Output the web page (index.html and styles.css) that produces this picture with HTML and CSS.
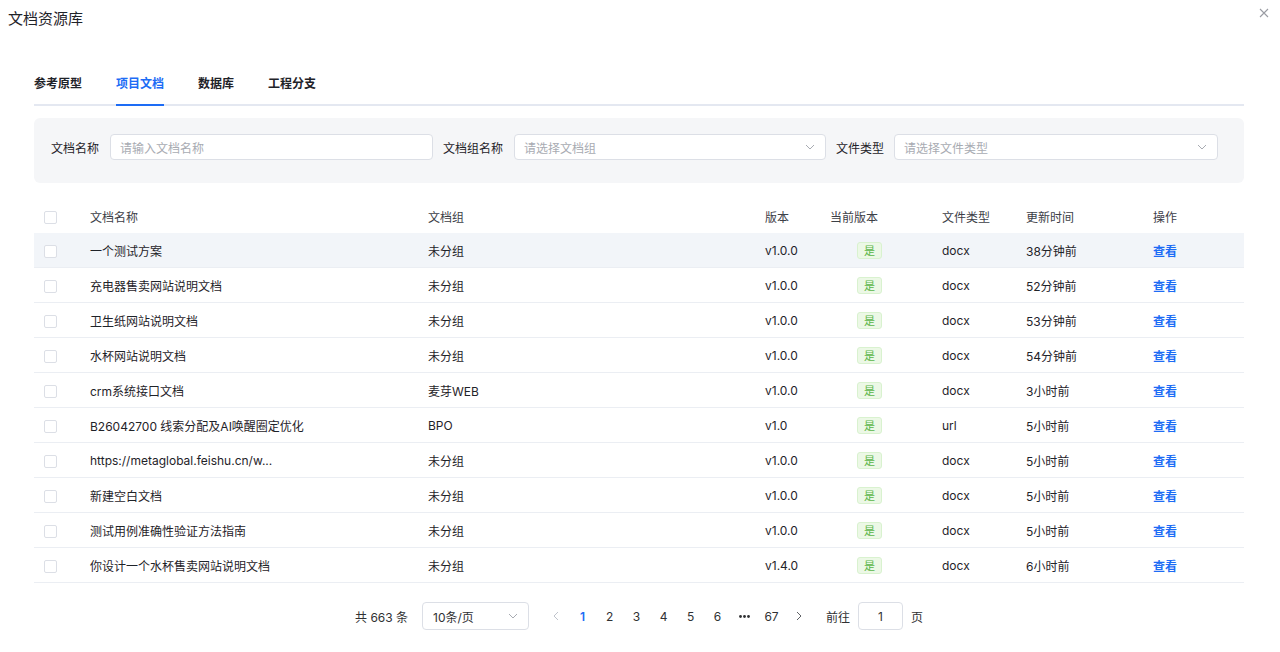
FILE: index.html
```html
<!DOCTYPE html>
<html lang="zh-CN">
<head>
    <meta charset="utf-8">
    <title>文档资源库</title>
    <link rel="stylesheet" href="styles.css">
</head>
<body>
    <div class="Dialog">
        <div class="Header">
            <span class="Title">文档资源库</span>
            <svg class="Close" width="10" height="10" viewBox="0 0 10 10"><path d="M1 1L9 9M9 1L1 9" stroke="#9a9ca3" stroke-width="1.1"/></svg>
        </div>

        <div class="Tabs">
            <div class="Tab">参考原型</div>
            <div class="Tab Active">项目文档</div>
            <div class="Tab">数据库</div>
            <div class="Tab">工程分支</div>
        </div>

        <div class="Filter">
            <label class="Label">文档名称</label>
            <div class="Input Name"><span class="Placeholder">请输入文档名称</span></div>
            <label class="Label">文档组名称</label>
            <div class="Input Group">
                <span class="Placeholder">请选择文档组</span>
                <svg class="Arrow" width="10" height="6" viewBox="0 0 10 6"><path d="M1 1L5 5L9 1" fill="none" stroke="#a8abb2" stroke-width="1"/></svg>
            </div>
            <label class="Label Short">文件类型</label>
            <div class="Input Type">
                <span class="Placeholder">请选择文件类型</span>
                <svg class="Arrow" width="10" height="6" viewBox="0 0 10 6"><path d="M1 1L5 5L9 1" fill="none" stroke="#a8abb2" stroke-width="1"/></svg>
            </div>
        </div>

        <table class="Grid">
            <colgroup>
                <col style="width:46px"><col style="width:338px"><col style="width:337px"><col style="width:65px">
                <col style="width:112px"><col style="width:84px"><col style="width:127px"><col style="width:101px">
            </colgroup>
            <thead>
                <tr>
                    <th><span class="Check"></span></th>
                    <th>文档名称</th><th>文档组</th><th>版本</th><th>当前版本</th><th>文件类型</th><th>更新时间</th><th>操作</th>
                </tr>
            </thead>
            <tbody>
                <tr class="Hover">
                    <td><span class="Check"></span></td><td>一个测试方案</td><td>未分组</td><td>v1.0.0</td>
                    <td><span class="Tag">是</span></td><td>docx</td><td>38分钟前</td><td><a class="Link">查看</a></td>
                </tr>
                <tr>
                    <td><span class="Check"></span></td><td>充电器售卖网站说明文档</td><td>未分组</td><td>v1.0.0</td>
                    <td><span class="Tag">是</span></td><td>docx</td><td>52分钟前</td><td><a class="Link">查看</a></td>
                </tr>
                <tr>
                    <td><span class="Check"></span></td><td>卫生纸网站说明文档</td><td>未分组</td><td>v1.0.0</td>
                    <td><span class="Tag">是</span></td><td>docx</td><td>53分钟前</td><td><a class="Link">查看</a></td>
                </tr>
                <tr>
                    <td><span class="Check"></span></td><td>水杯网站说明文档</td><td>未分组</td><td>v1.0.0</td>
                    <td><span class="Tag">是</span></td><td>docx</td><td>54分钟前</td><td><a class="Link">查看</a></td>
                </tr>
                <tr>
                    <td><span class="Check"></span></td><td>crm系统接口文档</td><td>麦芽WEB</td><td>v1.0.0</td>
                    <td><span class="Tag">是</span></td><td>docx</td><td>3小时前</td><td><a class="Link">查看</a></td>
                </tr>
                <tr>
                    <td><span class="Check"></span></td><td>B26042700 线索分配及AI唤醒圈定优化</td><td>BPO</td><td>v1.0</td>
                    <td><span class="Tag">是</span></td><td>url</td><td>5小时前</td><td><a class="Link">查看</a></td>
                </tr>
                <tr>
                    <td><span class="Check"></span></td><td>https://metaglobal.feishu.cn/w...</td><td>未分组</td><td>v1.0.0</td>
                    <td><span class="Tag">是</span></td><td>docx</td><td>5小时前</td><td><a class="Link">查看</a></td>
                </tr>
                <tr>
                    <td><span class="Check"></span></td><td>新建空白文档</td><td>未分组</td><td>v1.0.0</td>
                    <td><span class="Tag">是</span></td><td>docx</td><td>5小时前</td><td><a class="Link">查看</a></td>
                </tr>
                <tr>
                    <td><span class="Check"></span></td><td>测试用例准确性验证方法指南</td><td>未分组</td><td>v1.0.0</td>
                    <td><span class="Tag">是</span></td><td>docx</td><td>5小时前</td><td><a class="Link">查看</a></td>
                </tr>
                <tr>
                    <td><span class="Check"></span></td><td>你设计一个水杯售卖网站说明文档</td><td>未分组</td><td>v1.4.0</td>
                    <td><span class="Tag">是</span></td><td>docx</td><td>6小时前</td><td><a class="Link">查看</a></td>
                </tr>
            </tbody>
        </table>

        <div class="Pager">
            <span class="Total">共 663 条</span>
            <div class="Size">
                <span>10条/页</span>
                <svg width="10" height="6" viewBox="0 0 10 6"><path d="M1 1L5 5L9 1" fill="none" stroke="#a8abb2" stroke-width="1"/></svg>
            </div>
            <div class="Pages">
                <span class="Page"><svg width="6" height="10" viewBox="0 0 6 10"><path d="M5 1L1 5L5 9" fill="none" stroke="#c0c4cc" stroke-width="1"/></svg></span>
                <span class="Page Current">1</span>
                <span class="Page">2</span>
                <span class="Page">3</span>
                <span class="Page">4</span>
                <span class="Page">5</span>
                <span class="Page">6</span>
                <span class="Page"><svg width="11" height="3" viewBox="0 0 11 3"><circle cx="1.5" cy="1.5" r="1.4" fill="#303133"/><circle cx="5.5" cy="1.5" r="1.4" fill="#303133"/><circle cx="9.5" cy="1.5" r="1.4" fill="#303133"/></svg></span>
                <span class="Page">67</span>
                <span class="Page"><svg width="6" height="10" viewBox="0 0 6 10"><path d="M1 1L5 5L1 9" fill="none" stroke="#606266" stroke-width="1"/></svg></span>
            </div>
            <span class="Jump">前往</span>
            <div class="JumpInput">1</div>
            <span class="Unit">页</span>
        </div>
    </div>
</body>
</html>
```

FILE: styles.css
```css
body {
    margin: 0;
    background: #ffffff;
    font-family: "Inter", "Noto Sans CJK SC", sans-serif;
    font-size: 12px;
    color: #1f2329;
}

.Dialog {
    width: 1280px;
    height: 652px;
    position: relative;
}

.Header {
    height: 34px;
    padding-left: 8px;
    display: flex;
    align-items: center;
}

.Title {
    font-size: 15px;
    color: #1f2329;
}

.Close {
    position: absolute;
    top: 8px;
    right: 11px;
}

.Tabs {
    margin: 36px 36px 0 34px;
    display: flex;
    gap: 34px;
    border-bottom: 2px solid #e4e8f1;
    height: 34px;
}

.Tab {
    font-size: 12px;
    font-weight: 600;
    color: #1f2329;
    line-height: 28px;
    margin-bottom: -2px;
    border-bottom: 2px solid transparent;
}

.Tab.Active {
    color: #1d6cf5;
    border-bottom-color: #1d6cf5;
}

.Filter {
    margin: 12px 36px 0 34px;
    height: 65px;
    box-sizing: border-box;
    padding: 16px 0 0 17px;
    background: #f5f6f8;
    border-radius: 6px;
    display: flex;
    align-items: flex-start;
}

.Label {
    line-height: 26px;
    padding-top: 2px;
    font-size: 12px;
    color: #1f2329;
    margin-right: 11px;
}

.Label.Short {
    margin-right: 10px;
}

.Input {
    height: 26px;
    box-sizing: border-box;
    border: 1px solid #dcdfe6;
    border-radius: 4px;
    background: #ffffff;
    display: flex;
    align-items: center;
    justify-content: space-between;
    padding: 0 10px 0 9px;
    margin-right: 10px;
}

.Input.Name {
    width: 323px;
}

.Input.Group {
    width: 312px;
}

.Input.Type {
    width: 324px;
}

.Placeholder {
    color: #a8abb2;
}

.Grid {
    margin: 16px 0 0 34px;
    width: 1210px;
    table-layout: fixed;
    border-collapse: collapse;
}

.Grid th {
    height: 34px;
    padding: 0 0 0 10px;
    text-align: left;
    font-weight: normal;
    color: #3d4047;
}

.Grid td {
    height: 34px;
    padding: 0 0 0 10px;
    border-bottom: 1px solid #ebeef3;
    white-space: nowrap;
    color: #1f2329;
}

.Grid tr.Hover td {
    background: #f2f5f9;
}

.Check {
    display: inline-block;
    width: 11px;
    height: 11px;
    border: 1px solid #dcdfe6;
    border-radius: 2px;
    background: #ffffff;
    vertical-align: middle;
}

.Tag {
    display: inline-block;
    margin-left: 27px;
    height: 17px;
    line-height: 16px;
    padding: 0 6px;
    box-sizing: border-box;
    border: 1px solid #d9f2cf;
    border-radius: 3px;
    background: #ecf8e6;
    color: #5ab548;
    font-size: 11px;
}

.Link {
    color: #1d6cf5;
    font-weight: 600;
}

.Pager {
    margin: 19px 0 0 355px;
    height: 28px;
    display: flex;
    align-items: center;
    color: #303133;
}

.Size {
    margin-left: 14px;
    width: 107px;
    height: 28px;
    box-sizing: border-box;
    border: 1px solid #dcdfe6;
    border-radius: 4px;
    display: flex;
    align-items: center;
    justify-content: space-between;
    padding: 0 10px;
}

.Pages {
    display: flex;
    margin-left: 13px;
}

.Page {
    width: 27px;
    text-align: center;
    display: flex;
    align-items: center;
    justify-content: center;
    height: 28px;
}

.Page.Current {
    color: #1d6cf5;
    font-weight: 600;
}

.Jump {
    margin-left: 14px;
}

.JumpInput {
    margin-left: 8px;
    width: 45px;
    height: 28px;
    box-sizing: border-box;
    border: 1px solid #dcdfe6;
    border-radius: 4px;
    display: flex;
    align-items: center;
    justify-content: center;
}

.Unit {
    margin-left: 8px;
}
```
